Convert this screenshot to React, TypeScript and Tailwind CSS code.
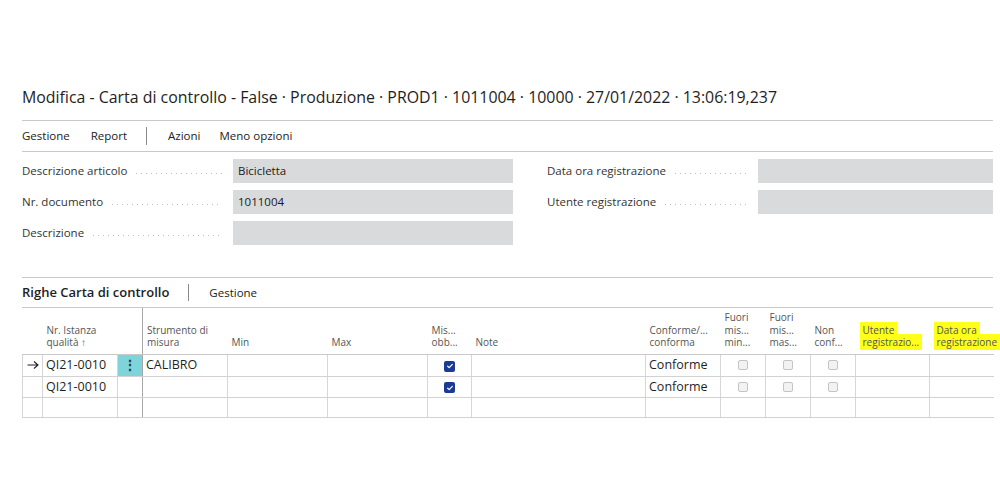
import React from "react";

const font = { fontFamily: '"Open Sans", "Noto Sans", sans-serif' };

type Field = { label: string; value?: string };

const leftFields: Field[] = [
  { label: "Descrizione articolo", value: "Bicicletta" },
  { label: "Nr. documento", value: "1011004" },
  { label: "Descrizione" },
];

const rightFields: Field[] = [
  { label: "Data ora registrazione" },
  { label: "Utente registrazione" },
];

const FieldRow = ({ label, value }: Field) => (
  <div className="flex h-[24px] items-center">
    <div className="flex w-[211px] shrink-0 items-center pr-[11px]">
      <span className="whitespace-nowrap text-[11.5px] text-[#333]">{label}</span>
      <span className="ml-[7px] h-[3px] flex-1 translate-y-[2px] bg-[radial-gradient(circle,#bdbdbd_0.7px,transparent_1px)] bg-[length:5px_3px] bg-repeat-x" />
    </div>
    <div className="flex h-full flex-1 items-center bg-[#d9dadc] px-[5px] text-[11.5px] font-medium text-[#1a1a1a]">
      {value}
    </div>
  </div>
);

const Checked = () => (
  <span className="inline-flex h-[11px] w-[11px] items-center justify-center rounded-[2px] bg-[#1b3a94]">
    <svg viewBox="0 0 12 12" className="h-[8px] w-[8px]">
      <path d="M2.5 6.3l2.3 2.2 4.7-5" fill="none" stroke="#fff" strokeWidth="1.8" strokeLinecap="round" strokeLinejoin="round" />
    </svg>
  </span>
);

const Unchecked = () => (
  <span className="inline-block h-[10px] w-[10px] rounded-[2px] border border-[#c4c4c4] bg-[#f2f2f2]" />
);

const cols = [20, 75, 25, 85, 100, 100, 44, 174, 75, 45, 45, 45, 74, 64];

type Head = { lines: string[]; hl?: boolean };

const heads: Head[] = [
  { lines: [] },
  { lines: ["Nr. Istanza", "qualità ↑"] },
  { lines: [] },
  { lines: ["Strumento di", "misura"] },
  { lines: ["Min"] },
  { lines: ["Max"] },
  { lines: ["Mis...", "obb..."] },
  { lines: ["Note"] },
  { lines: ["Conforme/...", "conforma"] },
  { lines: ["Fuori", "mis...", "min..."] },
  { lines: ["Fuori", "mis...", "mas..."] },
  { lines: ["Non", "conf..."] },
  { lines: ["Utente", "registrazio..."], hl: true },
  { lines: ["Data ora", "registrazione"], hl: true },
];

type Row = { arrow?: boolean; nr?: string; dots?: boolean; tool?: string; obb?: boolean; conf?: string; boxes?: boolean };

const rows: Row[] = [
  { arrow: true, nr: "QI21-0010", dots: true, tool: "CALIBRO", obb: true, conf: "Conforme", boxes: true },
  { nr: "QI21-0010", obb: true, conf: "Conforme", boxes: true },
  {},
];

const Cell = ({ i, children, className = "" }: { i: number; children?: React.ReactNode; className?: string }) => (
  <td
    className={`h-[20px] overflow-hidden whitespace-nowrap border-b border-[#d2d2d2] p-0 text-[12.5px] leading-[20px] text-[#1f1f1f] ${
      i === 3 ? "border-l border-l-[#a9a9a9]" : "border-l border-l-[#d6d6d6]"
    } ${className}`}
  >
    {children}
  </td>
);

export default function App() {
  return (
    <div className="h-[500px] w-[1000px] overflow-hidden bg-white pl-[22px] pr-[7px] pt-[85px]" style={font}>
      <h1 className="h-[24px] whitespace-nowrap text-[15.9px] font-medium leading-[24px] text-[#1e1e1e]">
        Modifica - Carta di controllo - False · Produzione · PROD1 · 1011004 · 10000 · 27/01/2022 · 13:06:19,237
      </h1>
      <div className="mt-[11px] border-t border-[#c9c9c9]" />
      <div className="flex h-[31px] items-center border-b border-[#c9c9c9] text-[11.5px] text-[#222]">
        <span>Gestione</span>
        <span className="ml-[21px]">Report</span>
        <span className="ml-[19px] h-[18px] w-px bg-[#8a8a8a]" />
        <span className="ml-[21px]">Azioni</span>
        <span className="ml-[19px]">Meno opzioni</span>
      </div>

      <div className="mt-[7px] grid grid-cols-[491px_446px] gap-x-[34px]">
        <div className="flex flex-col gap-[7px]">
          {leftFields.map((f) => (
            <FieldRow key={f.label} {...f} />
          ))}
        </div>
        <div className="flex flex-col gap-[7px]">
          {rightFields.map((f) => (
            <FieldRow key={f.label} {...f} />
          ))}
        </div>
      </div>

      <div className="mt-[32px] border-t border-[#c9c9c9]" />
      <div className="flex h-[30px] items-center border-b border-[#c9c9c9]">
        <span className="text-[13px] font-semibold text-[#1e1e1e]">Righe Carta di controllo</span>
        <span className="ml-[19px] h-[17px] w-px bg-[#8a8a8a]" />
        <span className="ml-[20px] text-[11.5px] text-[#222]">Gestione</span>
      </div>

      <table className="table-fixed border-collapse" style={{ width: 971 }}>
        <colgroup>
          {cols.map((w, i) => (
            <col key={i} style={{ width: w }} />
          ))}
        </colgroup>
        <thead>
          <tr>
            {heads.map((h, i) => (
              <th
                key={i}
                className={`h-[46px] border-b border-[#c9c9c9] p-0 pb-[5px] pl-[4px] text-left align-bottom text-[10px] font-normal leading-[12.5px] text-[#555] ${
                  i === 3 ? "border-l border-l-[#a9a9a9]" : ""
                }`}
              >
                {h.lines.map((l) => (
                  <div key={l} className="whitespace-nowrap">
                    {h.hl ? <span className="bg-[#ffff1a] px-[3px] py-px text-[#555]">{l}</span> : l}
                  </div>
                ))}
              </th>
            ))}
          </tr>
        </thead>
        <tbody>
          {rows.map((r, ri) => (
            <tr key={ri}>
              <Cell i={0} className="pl-[4px]">
                {r.arrow ? (
                  <svg viewBox="0 0 12 10" className="block h-[10px] w-[12px]">
                    <path d="M0.5 5h10.5M7 1.5L11 5 7 8.5" fill="none" stroke="#222" strokeWidth="1.1" />
                  </svg>
                ) : null}
              </Cell>
              <Cell i={1} className="pl-[3px]">{r.nr}</Cell>
              <Cell i={2} className={r.dots ? "bg-[#7fd3da] text-center" : ""}>
                {r.dots ? <span className="text-[14px] font-bold text-[#1f3b57]">⋮</span> : null}
              </Cell>
              <Cell i={3} className="pl-[3px]">{r.tool}</Cell>
              <Cell i={4} />
              <Cell i={5} />
              <Cell i={6} className="text-center">
                {r.obb ? (
                  <span className="inline-flex translate-y-[1px]">
                    <Checked />
                  </span>
                ) : null}
              </Cell>
              <Cell i={7} />
              <Cell i={8} className="pl-[3px]">{r.conf}</Cell>
              {[9, 10, 11].map((c) => (
                <Cell key={c} i={c} className="text-center">
                  {r.boxes ? (
                    <span className="inline-flex translate-y-[1px]">
                      <Unchecked />
                    </span>
                  ) : null}
                </Cell>
              ))}
              <Cell i={12} />
              <Cell i={13} />
            </tr>
          ))}
        </tbody>
      </table>
    </div>
  );
}
